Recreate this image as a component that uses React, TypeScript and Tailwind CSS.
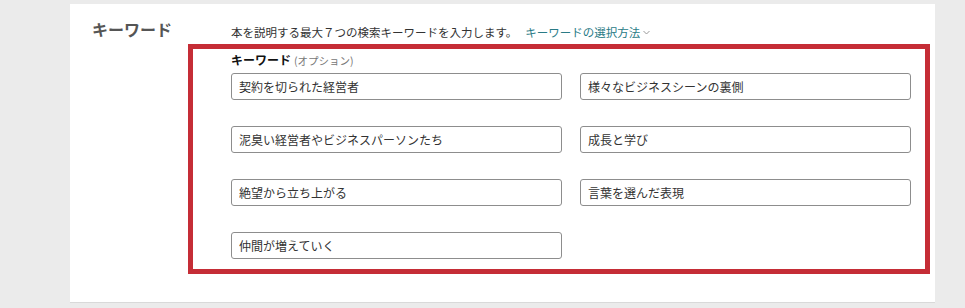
import React from 'react';

const keywords = [
  '契約を切られた経営者',
  '様々なビジネスシーンの裏側',
  '泥臭い経営者やビジネスパーソンたち',
  '成長と学び',
  '絶望から立ち上がる',
  '言葉を選んだ表現',
  '仲間が増えていく',
];

const font = { fontFamily: '"Noto Sans CJK JP", "Noto Sans", sans-serif' };

export default function App() {
  return (
    <div className="w-full h-[308px] bg-[#ebebeb] pt-[4px] overflow-hidden" style={font}>
      <div className="ml-[70px] w-[865px] h-[299px] bg-white border-b border-[#d9d9d9] flex">
        {/* left label */}
        <div className="w-[118px] shrink-0 pl-[22px] pt-[14px]">
          <h2 className="text-[16px] leading-[22px] font-bold text-[#555]">キーワード</h2>
        </div>

        {/* right column */}
        <div className="flex-1 pt-[20px]">
          <p className="pl-[43px] text-[11.5px] leading-[16px] text-[#333] flex items-center">
            本を説明する最大７つの検索キーワードを入力します。
            <a className="ml-[8px] text-[#2a7b86] flex items-center gap-[3px]">
              キーワードの選択方法
              <svg width="7" height="5" viewBox="0 0 7 5" fill="none">
                <path d="M0.5 1l3 3 3-3" stroke="#999" strokeWidth="1" />
              </svg>
            </a>
          </p>

          <div className="mt-[4px] w-[742px] h-[230px] border-[5px] border-[#c52d36] pl-[38px] pt-[3px]">
            <div className="text-[12px] leading-[16px] text-[#111] mb-[4px]">
              <span className="font-bold">キーワード</span>
              <span className="text-[10.5px] text-[#777] ml-[3px]">(オプション)</span>
            </div>
            <div className="grid grid-cols-[331px_331px] gap-x-[18px] gap-y-[26px]">
              {keywords.map((k) => (
                <input
                  key={k}
                  readOnly
                  value={k}
                  className="h-[27px] w-full border border-[#8d8d8d] rounded-[3px] px-[7px] text-[12px] text-[#333] bg-white outline-none"
                  style={font}
                />
              ))}
            </div>
          </div>
        </div>
      </div>
    </div>
  );
}
